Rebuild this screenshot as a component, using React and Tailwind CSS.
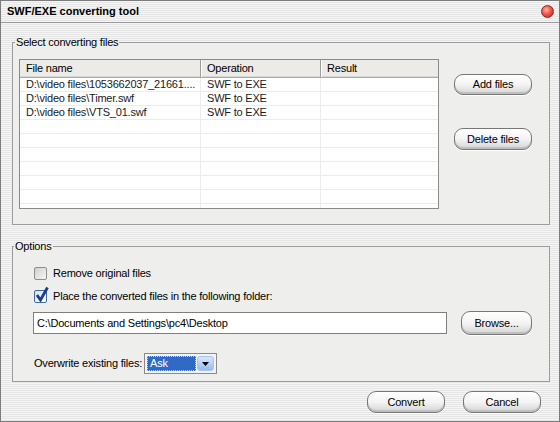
import React from "react";

function XPButton({ children, size = "w-[78px] h-[22px]", className = "" }) {
  return (
    <button
      className={`${size} rounded-[9px] border border-[#777777] bg-linear-to-b from-white via-[#f4f4f4] to-[#d4d4d4] shadow-[inset_0_-2px_0_#bfbfbf,inset_0_1px_0_#ffffff,0_1px_0_#ffffff] text-[11px] leading-[13px] tracking-[-0.2px] text-black ${className}`}
    >
      {children}
    </button>
  );
}

const rows = [
  ["D:\\video files\\1053662037_21661....", "SWF to EXE", ""],
  ["D:\\video files\\Timer.swf", "SWF to EXE", ""],
  ["D:\\video files\\VTS_01.swf", "SWF to EXE", ""],
  ["", "", ""],
  ["", "", ""],
  ["", "", ""],
  ["", "", ""],
  ["", "", ""],
  ["", "", ""],
  ["", "", ""],
];

function Checkbox({ checked }) {
  return (
    <div className="relative w-[13px] h-[13px] shrink-0">
      <div
        className={
          checked
            ? "w-[13px] h-[13px] rounded-[2px] border border-[#3a6ea5] bg-linear-to-br from-[#d9e2ee] to-[#ffffff]"
            : "w-[13px] h-[13px] rounded-[2px] border border-[#8e8e8e] bg-linear-to-br from-[#d0d0d0] to-[#f6f6f6]"
        }
      />
      {checked && (
        <svg className="absolute left-[1px] top-[-4px]" width="14" height="16" viewBox="0 0 14 16">
          <path d="M2 9 L5.5 14 L12.5 1.5" fill="none" stroke="#1b3d8f" strokeWidth="2.8" strokeLinejoin="miter" />
        </svg>
      )}
    </div>
  );
}

export default function App() {
  return (
    <div className="w-[560px] h-[422px] border border-[#7c7c7c] bg-[image:repeating-linear-gradient(180deg,#f5f5f5_0px,#f5f5f5_1px,#e6e6e6_1px,#e6e6e6_2px)] font-['Liberation_Sans',Arial,sans-serif] text-[11px] text-black flex flex-col overflow-hidden">
      {/* Title bar */}
      <div className="h-[22px] shrink-0 border-b border-[#9a9a9a] flex items-center justify-between pl-[6px] pr-[5px]">
        <span className="font-bold text-[11px] leading-[13px] text-black">SWF/EXE converting tool</span>
        <div className="w-[13px] h-[13px] rounded-full border border-[#8a2a22] bg-[radial-gradient(circle_at_40%_35%,#ffb3a8_0%,#f0574a_45%,#b81f14_100%)]" />
      </div>

      {/* Group 1 */}
      <fieldset className="mt-[13px] ml-[11px] w-[538px] h-[189px] shrink-0 border border-[#9b9b9b] bg-[#eeeeec] px-[6px] pt-[10px] m-0 tracking-[-0.2px]">
        <legend className="ml-[-4px] px-[1px] text-[11px] leading-[13px]">Select converting files</legend>
        <div className="flex">
          <div className="w-[420px] h-[150px] border border-[#8a8a8a] bg-white flex flex-col overflow-hidden">
            <div className="h-[18px] shrink-0 flex bg-[#ecebe7] border-b border-[#a9a9a9] shadow-[inset_0_-1px_0_#d6d6d6]">
              <div className="w-[181px] pl-[6px] leading-[17px] border-r border-[#9c9c9c] shadow-[1px_0_0_#ffffff]">File name</div>
              <div className="w-[120px] pl-[6px] leading-[17px] border-r border-[#9c9c9c] shadow-[1px_0_0_#ffffff]">Operation</div>
              <div className="flex-1 pl-[6px] leading-[17px]">Result</div>
            </div>
            {rows.map((r, i) => (
              <div key={i} className="h-[14px] shrink-0 flex border-b border-[#ececec] text-[#1a1a1a]">
                <div className="w-[181px] pl-[6px] leading-[13px] border-r border-[#ececec] whitespace-nowrap overflow-hidden">{r[0]}</div>
                <div className="w-[120px] pl-[6px] leading-[13px] border-r border-[#ececec] whitespace-nowrap">{r[1]}</div>
                <div className="flex-1 pl-[6px] leading-[13px]">{r[2]}</div>
              </div>
            ))}
          </div>
          <div className="ml-[15px] flex flex-col">
            <XPButton size="w-[78px] h-[21px]" className="mt-[15px]">Add files</XPButton>
            <XPButton size="w-[78px] h-[22px]" className="mt-[33px]">Delete files</XPButton>
          </div>
        </div>
      </fieldset>

      {/* Group 2 */}
      <fieldset className="mt-[15px] ml-[11px] w-[538px] h-[142px] shrink-0 border border-[#9b9b9b] bg-[#eeeeec] pl-[21px] pr-[6px] pt-[13px] m-0 tracking-[-0.2px]">
        <legend className="ml-[-20px] px-[1px] text-[11px] leading-[13px]">Options</legend>
        <div className="flex items-center h-[14px]">
          <Checkbox checked={false} />
          <span className="ml-[6px] leading-[13px]">Remove original files</span>
        </div>
        <div className="flex items-center h-[14px] mt-[9px]">
          <Checkbox checked={true} />
          <span className="ml-[6px] leading-[13px]">Place the converted files in the following folder:</span>
        </div>
        <div className="flex items-center mt-[8px]">
          <div className="ml-[-1px] w-[414px] h-[22px] border border-[#7e7e7e] bg-white pl-[3px] leading-[20px]">
            C:\Documents and Settings\pc4\Desktop
          </div>
          <XPButton size="w-[71px] h-[24px]" className="ml-[14px]">Browse...</XPButton>
        </div>
        <div className="flex items-center mt-[18px]">
          <span className="w-[105px] whitespace-nowrap leading-[13px]">Overwrite existing files:</span>
          <div className="ml-[5px] w-[73px] h-[21px] border border-[#8a8a8a] bg-[#f4f4f4] p-[2px] flex">
            <div className="flex-1 bg-[#316ac5] border border-dotted border-[#e8d27a] text-white leading-[13px] pl-[2px]">Ask</div>
            <div className="w-[17px] ml-[1px] rounded-[3px] border border-[#a9c5ef] bg-linear-to-b from-[#d7e7ff] to-[#94bbf0] flex items-center justify-center">
              <svg width="7" height="4" viewBox="0 0 7 4">
                <path d="M0 0 H7 L3.5 4 Z" fill="#000" />
              </svg>
            </div>
          </div>
        </div>
      </fieldset>

      {/* Bottom buttons */}
      <div className="mt-[9px] flex justify-end pr-[18px] gap-[18px]">
        <XPButton size="w-[78px] h-[22px]">Convert</XPButton>
        <XPButton size="w-[78px] h-[22px]">Cancel</XPButton>
      </div>
    </div>
  );
}
